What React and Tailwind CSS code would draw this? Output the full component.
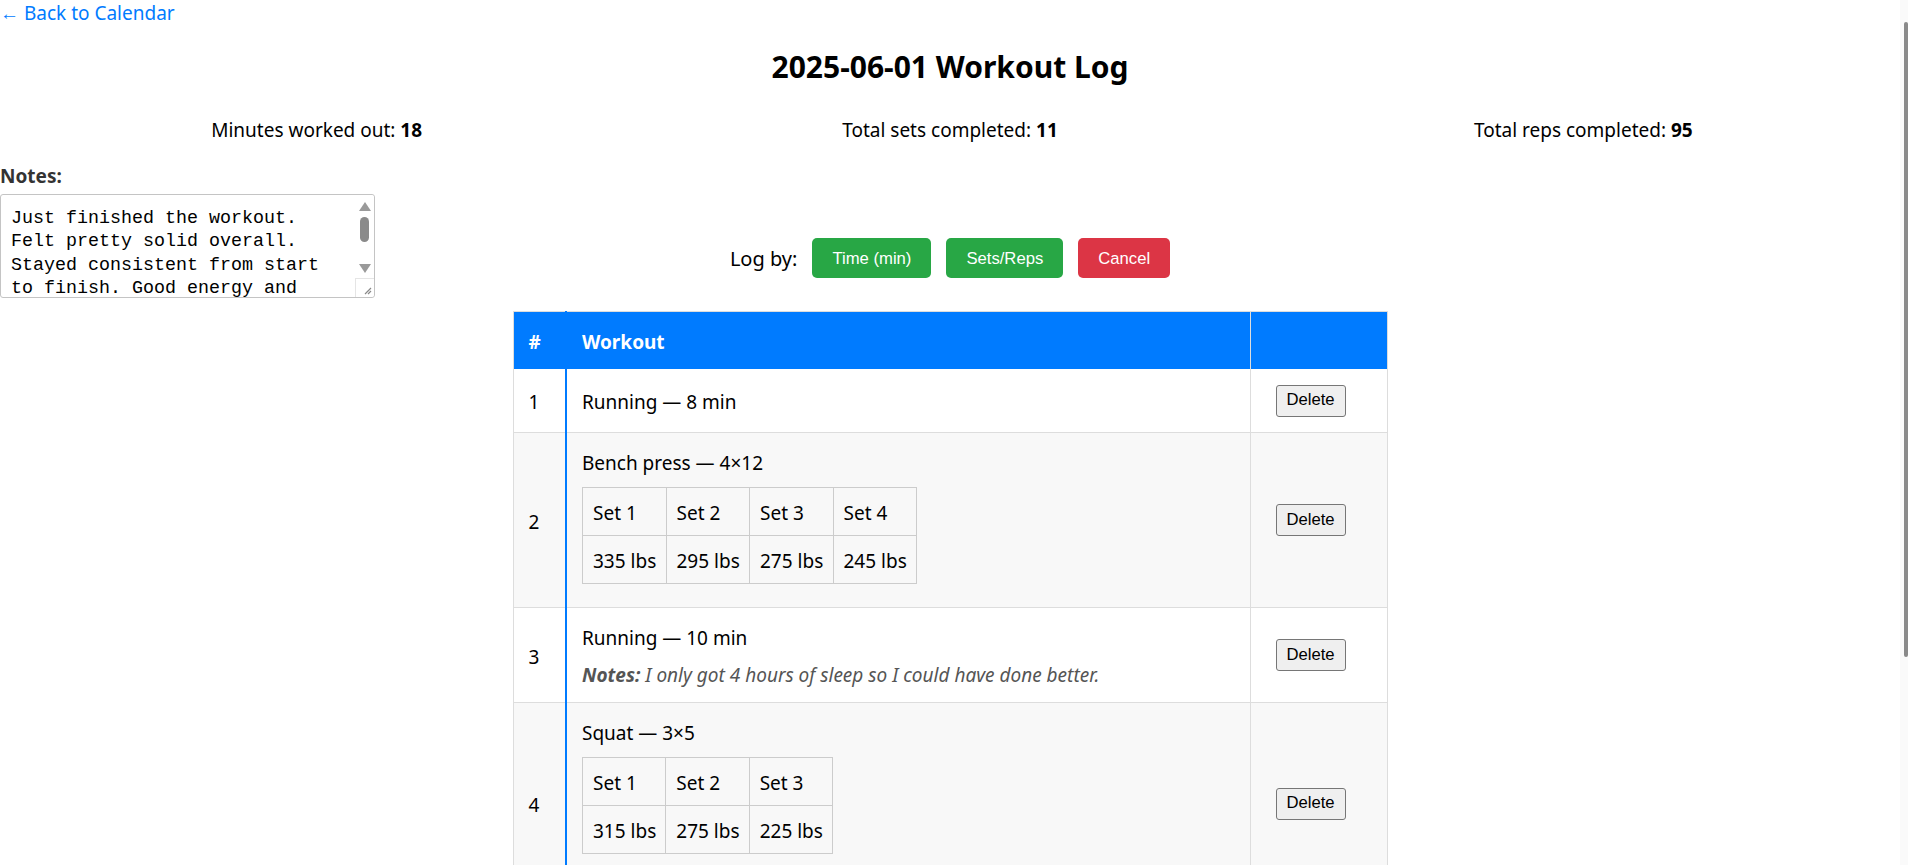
const workouts = [
  { id: 1, title: 'Running — 8 min' },
  { id: 2, title: 'Bench press — 4×12', sets: ['335 lbs', '295 lbs', '275 lbs', '245 lbs'] },
  { id: 3, title: 'Running — 10 min', notes: 'I only got 4 hours of sleep so I could have done better.' },
  { id: 4, title: 'Squat — 3×5', sets: ['315 lbs', '275 lbs', '225 lbs'], notes: 'Last set felt heavy, need to work on depth.' },
  { id: 5, title: 'Deadlift — 4×8', sets: ['365 lbs', '335 lbs', '315 lbs', '275 lbs'] },
];

const notesText =
  'Just finished the workout. Felt pretty solid overall. Stayed consistent from start to finish. Good energy and focus throughout the whole session, no real issues with form or pacing. Might bump up the weight a little next time and keep pushing. Recovery has been good this week.';

const SetsTable = ({ sets }) => (
  <table
    className={`my-[10px] border-collapse table-fixed ${sets.length === 4 ? 'w-[335px]' : 'w-[251px]'}`}
  >
    <thead>
      <tr>
        {sets.map((_, i) => (
          <th key={i} className="border border-[#ccc] px-[10px] pt-[12px] pb-[8px] text-left font-normal leading-[27px] whitespace-nowrap">
            Set {i + 1}
          </th>
        ))}
      </tr>
    </thead>
    <tbody>
      <tr>
        {sets.map((w, i) => (
          <td key={i} className="border border-[#ccc] px-[10px] pt-[12px] pb-[8px] leading-[27px] whitespace-nowrap">
            {w}
          </td>
        ))}
      </tr>
    </tbody>
  </table>
);

const Btn = ({ children, color }) => (
  <button
    className={`h-[40px] px-[20px] rounded-[5px] text-white text-[16.67px] font-['Liberation_Sans',Arial,sans-serif] ${color}`}
  >
    {children}
  </button>
);

const Tri = ({ down }) => (
  <svg width="12" height="9" viewBox="0 0 12 9" className="block">
    <path d={down ? 'M0 0 L12 0 L6 9 Z' : 'M6 0 L12 9 L0 9 Z'} fill="#9a9a9a" />
  </svg>
);

export default function App() {
  return (
    <div className="flex h-screen overflow-hidden bg-white text-black font-['Noto_Sans',sans-serif] text-[19px] leading-[27px]">
      <div className="flex-1 min-w-0 pb-[55px]">
        {/* Back link */}
        <div>
          <a href="#" className="text-[#007bff]">← Back to Calendar</a>
        </div>

        {/* Title */}
        <h2 className="mt-[22px] text-center text-[30px] leading-[36px] font-bold">2025-06-01 Workout Log</h2>

        {/* Stats */}
        <div className="mt-[32px] grid grid-cols-3 text-center">
          <div>Minutes worked out: <b>18</b></div>
          <div>Total sets completed: <b>11</b></div>
          <div>Total reps completed: <b>95</b></div>
        </div>

        {/* Notes + log controls */}
        <div className="mt-[19px] grid grid-cols-[1fr_auto_1fr]">
          <div>
            <label className="block font-bold text-[#333]">Notes:</label>
            <div className="relative mt-[4px] w-[375px]">
              <textarea
                defaultValue={notesText}
                className="block w-[375px] h-[104px] overflow-hidden border border-[#c4c4c4] rounded-[3px] pt-[12px] pl-[10px] pr-[29px] font-['Liberation_Mono',monospace] text-[18.33px] leading-[23.3px] text-black resize-none"
              />
              {/* textarea scrollbar */}
              <div className="absolute right-[1px] top-[1px] bottom-[1px] w-[19px] flex flex-col items-center bg-white rounded-r-[3px]">
                <div className="mt-[7px]"><Tri /></div>
                <div className="mt-[6px] h-[25px] w-[9px] rounded-full bg-[#8a8a8a]" />
                <div className="mt-[22px]"><Tri down /></div>
                <div className="mt-auto h-[19px] w-[19px] border-t border-l border-[#e5e5e5] relative">
                  <svg width="10" height="10" viewBox="0 0 10 10" className="absolute right-[2px] bottom-[2px]">
                    <path d="M9 3 L3 9 M9 6 L6 9" stroke="#888" strokeWidth="1.2" />
                  </svg>
                </div>
              </div>
            </div>
          </div>
          <div className="self-end mb-[20px] flex items-center gap-[15px]">
            <span className="text-[20px]">Log by:</span>
            <Btn color="bg-[#28a745]">Time (min)</Btn>
            <Btn color="bg-[#28a745]">Sets/Reps</Btn>
            <Btn color="bg-[#dc3545]">Cancel</Btn>
          </div>
          <div />
        </div>

        {/* Workout table */}
        <table className="mx-auto mt-[13px] w-[875px] border-collapse border border-[#ddd]">
          <thead>
            <tr className="bg-[#007bff] text-white">
              <th className="w-[53px] px-[15px] pt-[17px] pb-[13px] text-left font-bold">#</th>
              <th className="border-l-2 border-l-[#007bff] px-[15px] pt-[17px] pb-[13px] text-left font-bold">Workout</th>
              <th className="w-[137px] border-l border-l-[#ddd] px-[15px] pt-[17px] pb-[13px]"></th>
            </tr>
          </thead>
          <tbody>
            {workouts.map((w, idx) => (
              <tr key={w.id} className={`border-b border-[#ddd] ${idx % 2 === 1 ? 'bg-[#f8f8f8]' : 'bg-white'}`}>
                <td className="px-[15px] pt-[17px] pb-[13px] align-middle">{w.id}</td>
                <td className="border-l-2 border-l-[#007bff] px-[15px] pt-[17px] pb-[13px] align-middle">
                  <div>{w.title}</div>
                  {w.sets && <SetsTable sets={w.sets} />}
                  {w.notes && (
                    <div className="mt-[10px] italic text-[#555]">
                      <b>Notes:</b> {w.notes}
                    </div>
                  )}
                </td>
                <td className="border-l border-l-[#ddd] pl-[25px] pr-[15px] py-[15.5px] align-middle">
                  <button className="h-[32px] w-[70px] rounded-[3px] border border-[#767676] bg-[#efefef] text-[16.67px] leading-none font-['Liberation_Sans',Arial,sans-serif] text-black">
                    Delete
                  </button>
                </td>
              </tr>
            ))}
          </tbody>
        </table>
      </div>

      {/* page scrollbar */}
      <div className="w-[8px] shrink-0 bg-[#fafafa] flex flex-col items-end">
        <div className="mt-[22px] h-[635px] w-[4px] rounded-full bg-[#8a8a8a]" />
      </div>
    </div>
  );
}
